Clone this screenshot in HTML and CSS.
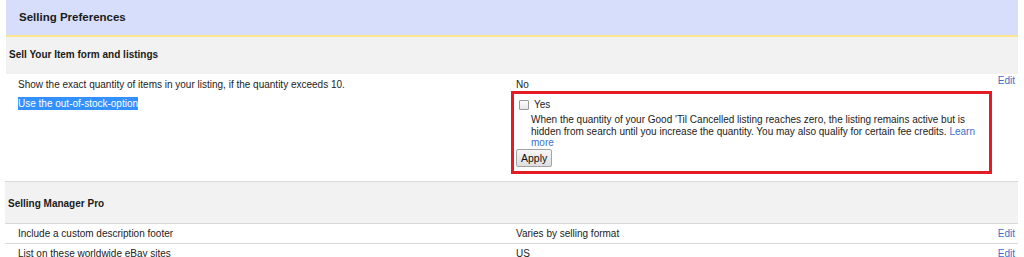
FILE: index.html
```html
<!DOCTYPE html>
<html>
<head>
<meta charset="utf-8">
<link rel="stylesheet" href="styles.css">
</head>
<body>
<div class="prefs">
  <div class="title">Selling Preferences</div>
  <div class="section-head">Sell Your Item form and listings</div>
  <div class="group">
    <div class="row-grid">
      <div class="labels">
        <div class="lbl">Show the exact quantity of items in your listing, if the quantity exceeds 10.</div>
        <div class="lbl"><span class="sel">Use the out-of-stock-option</span></div>
      </div>
      <div class="value">
        <div class="val-text">No</div>
        <div class="callout">
          <div class="check-row"><span class="checkbox"></span><span>Yes</span></div>
          <div class="desc">When the quantity of your Good 'Til Cancelled listing reaches zero, the listing remains active but is hidden from search until you increase the quantity. You may also qualify for certain fee credits. <a class="link" href="#">Learn more</a></div>
          <div class="btn">Apply</div>
        </div>
      </div>
      <div class="edit"><a class="link" href="#">Edit</a></div>
    </div>
  </div>
  <div class="section-head second">Selling Manager Pro</div>
  <div class="row">
    <div class="cell-label">Include a custom description footer</div>
    <div class="cell-value">Varies by selling format</div>
    <div class="cell-edit"><a class="link" href="#">Edit</a></div>
  </div>
  <div class="row">
    <div class="cell-label">List on these worldwide eBay sites</div>
    <div class="cell-value">US</div>
    <div class="cell-edit"><a class="link" href="#">Edit</a></div>
  </div>
</div>
</body>
</html>
```

FILE: styles.css
```css
html, body {
  margin: 0;
  padding: 0;
  background: #ffffff;
}
body {
  font-family: "Liberation Sans", Arial, sans-serif;
  font-size: 10px;
  color: #222222;
  overflow: hidden;
}
.prefs {
  margin-left: 6px;
  width: 1012px;
}
.title {
  height: 35px;
  line-height: 35px;
  background: #d6defc;
  border-bottom: 2px solid #fbe58f;
  padding-left: 13px;
  font-weight: bold;
  font-size: 11.5px;
  color: #1a1a1a;
}
.section-head {
  height: 37px;
  line-height: 35px;
  background: #f2f2f2;
  padding-left: 3px;
  font-weight: bold;
  font-size: 10px;
  color: #1a1a1a;
}
.section-head.second {
  margin-left: -1px;
  height: 41px;
  line-height: 43px;
  border-top: 1px solid #d9d9d9;
}
.group {
  padding-top: 1px;
  padding-bottom: 7px;
}
.row-grid {
  display: grid;
  grid-template-columns: 505px 1fr auto;
}
.labels {
  padding-left: 12px;
}
.lbl {
  line-height: 19px;
}
.sel {
  background: #3390ff;
  color: #ffffff;
  padding: 1px 0;
}
.val-text {
  line-height: 19px;
  padding-left: 5px;
}
.callout {
  margin-top: -3px;
  width: 475px;
  border: 3px solid #e41b23;
  padding-bottom: 4px;
}
.check-row {
  display: flex;
  align-items: center;
  gap: 5px;
  padding-top: 4px;
  padding-left: 5px;
  line-height: 13px;
}
.checkbox {
  width: 8px;
  height: 8px;
  border: 1px solid #9a9a9a;
  background: linear-gradient(#fdfdfd, #e6e6e6);
  border-radius: 1px;
}
.desc {
  margin-top: 3px;
  padding-left: 17px;
  padding-right: 12px;
  line-height: 11.5px;
}
.link {
  color: #3a6fcb;
  text-decoration: none;
}
.btn {
  display: inline-block;
  margin-top: 0;
  margin-left: 2px;
  height: 16px;
  line-height: 16px;
  padding: 0 4px;
  border: 1px solid #a3a3a3;
  border-radius: 2px;
  background: linear-gradient(#f6f6f6, #dedede);
  color: #111111;
  font-size: 10.5px;
}
.edit {
  margin-top: -1px;
  padding-right: 3px;
  line-height: 13px;
}
.row {
  display: grid;
  grid-template-columns: 505px 1fr auto;
  border-top: 1px solid #d9d9d9;
  height: 19px;
  line-height: 19px;
  margin-left: -1px;
}
.cell-label {
  padding-left: 13px;
}
.cell-value {
  padding-left: 6px;
}
.cell-edit {
  padding-right: 3px;
}
```
